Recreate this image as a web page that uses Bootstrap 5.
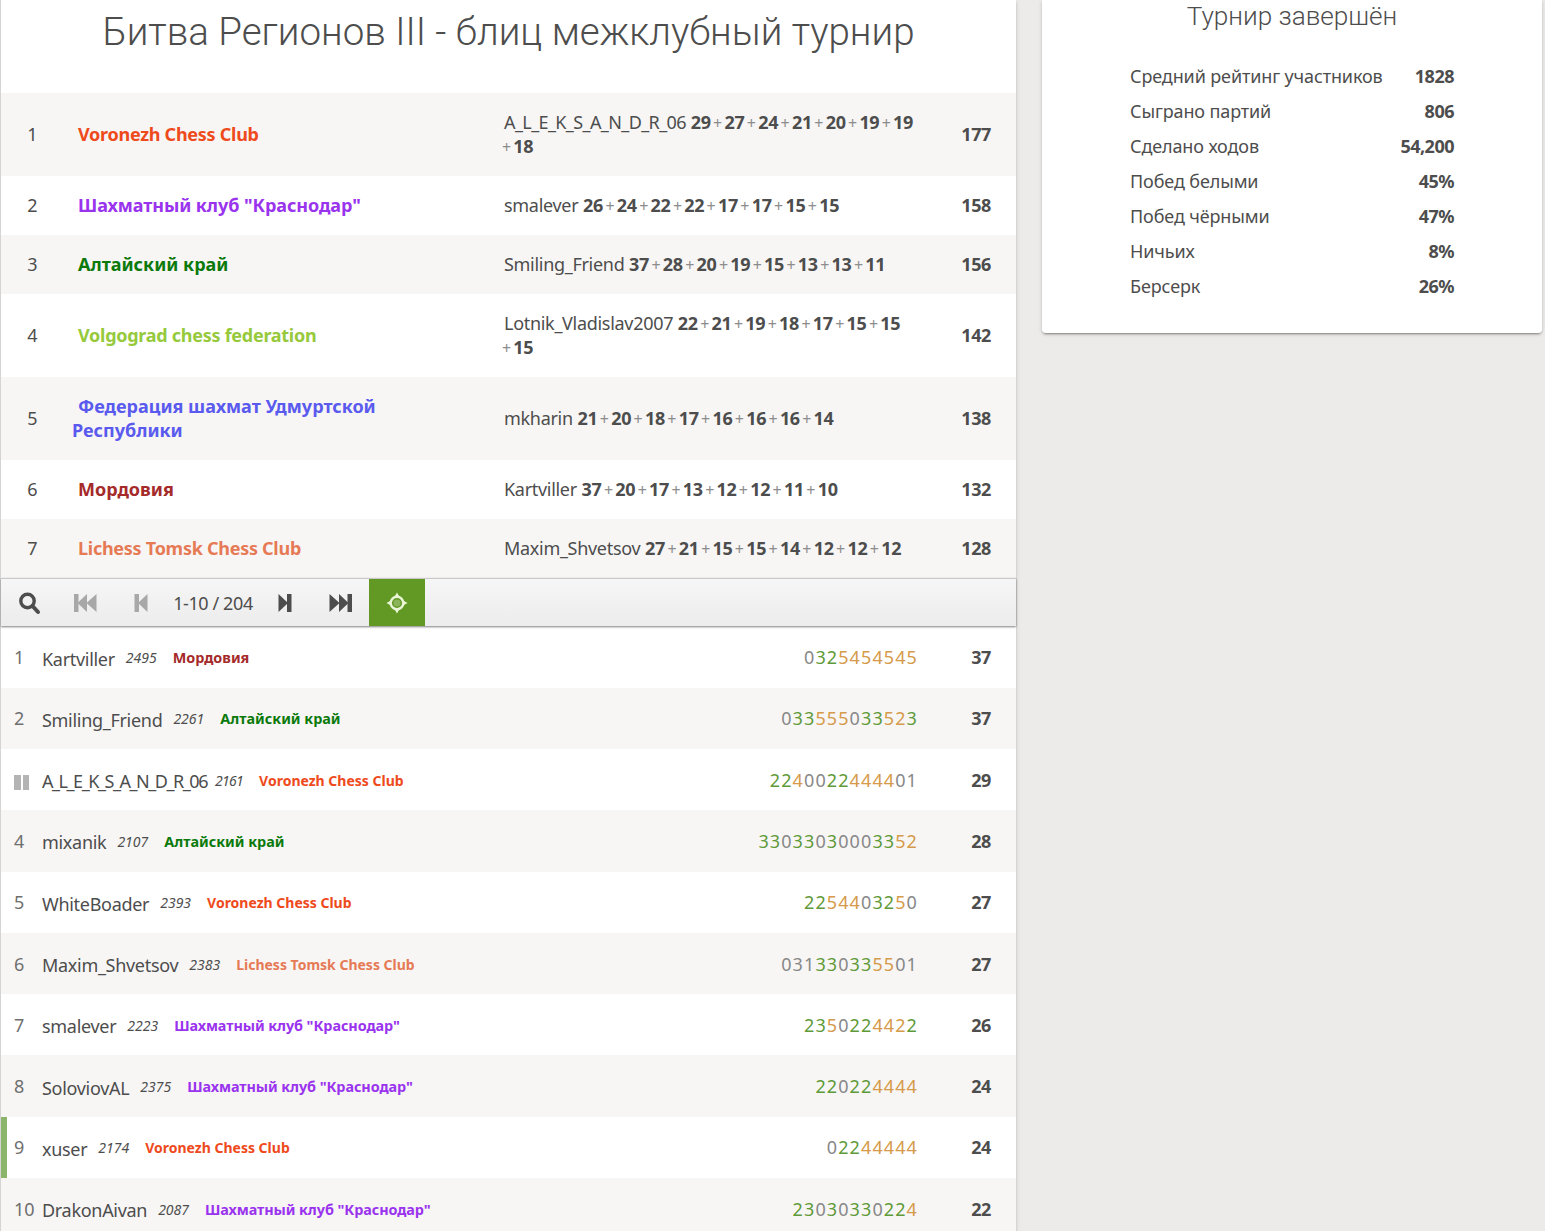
<!DOCTYPE html>
<html lang="ru">
<head>
<meta charset="utf-8">
<title>Битва Регионов III</title>
<link rel="stylesheet" href="https://cdn.jsdelivr.net/npm/bootstrap@5.3.0/dist/css/bootstrap.min.css">
<style>
html,body{height:1231px;overflow:hidden}
body{background:#edebe9;color:#4d4d4d;font-family:"Noto Sans",sans-serif;font-size:18px;line-height:24px}
.page-wrap{width:1545px;height:1231px;align-items:flex-start}
.main-box{width:1016px;height:1231px;background:#fff;border-left:1px solid #d4d4d4;box-shadow:0 2px 2px 0 rgba(0,0,0,.14),0 3px 1px -2px rgba(0,0,0,.2),0 1px 5px 0 rgba(0,0,0,.12);flex:none}
.main-box>*{flex:none}
.tour-title{height:93px;margin:0;padding-top:11px;font:300 38.5px/42px Roboto,sans-serif;text-align:center;color:#4d4d4d}
.team-row{align-items:center;padding:16.5px 0 18.5px}
.team-row:nth-child(odd){background:#f7f6f5}
.team-rank{width:71px;flex:none;text-align:center;padding-right:8px}
.team-name{width:432px;flex:none;font-weight:700;padding-right:40px}
.team-name span{margin-left:6px}
.team-name.t-lat{letter-spacing:-.27px}
.team-players{width:425px;flex:none}
.team-players b{font-weight:700;letter-spacing:-.3px}
.team-players em{font-style:normal;color:#8c8c8c;font-size:16px;line-height:1;margin:0 2.2px 0 2.4px;font-weight:400}
.team-players em.wrap-plus{margin-left:-2px}
.plr{letter-spacing:-.3px}
.plr.plr-long{letter-spacing:-.6px}
.total{margin-left:auto;padding-right:25px;font-weight:700;letter-spacing:-.4px}
.pager-bar{height:48.4px;border-top:1px solid #c9c9c9;background:linear-gradient(#f6f6f6,#ececec);box-shadow:0 1px 2px rgba(0,0,0,.5);position:relative;z-index:2;align-items:stretch}
.pager-btn{width:56px;flex:none;display:flex;align-items:center;justify-content:center}
.pager-btn svg{display:block}
.pager-off{color:#a8a8a8}
.pager-label{width:88px;flex:none;display:flex;align-items:center;justify-content:center;white-space:nowrap;letter-spacing:-.4px}
.pager-on{background:#629924;color:#eaf5d8}
.player-row{height:61.3px;align-items:center;flex:none;position:relative}
.player-row:nth-child(even){background:#f7f6f5}
.player-pos{width:41px;flex:none;padding-left:13px;color:#6f6f6f}
.player-name{white-space:nowrap;letter-spacing:-.3px;margin-top:3px}
.player-name.name-long{letter-spacing:-1.45px;margin-right:-3px}
.player-rating{font-style:italic;font-size:14px;margin-left:11px;margin-top:2px;white-space:nowrap}
.name-long~.player-rating{letter-spacing:-.7px}
.player-team{font-weight:700;font-size:14.4px;margin-left:16px;margin-top:2px;white-space:nowrap}
.player-team.t-lat{font-size:14px}
.player-score{margin-left:auto;letter-spacing:1.1px;white-space:nowrap;color:#888}
.player-total{width:98px;flex:none;text-align:right;padding-right:25px;font-weight:700;letter-spacing:-.4px}
.me-mark{position:absolute;left:0;top:0;bottom:0;width:6px;background:#8ab56b}
.pause-mark{display:flex;gap:2px;width:15px;height:15px;margin-top:5px}
.pause-mark i{flex:1;background:#b4b4b4}
.sg{color:#5f9a38}.so{color:#d59a4a}.sz{color:#888}
.c-vor{color:#ee4a1c}.c-kra{color:#9a33ee;letter-spacing:-.08px}.c-alt{color:#0b7a0b}.c-vol{color:#96c93c}.c-udm{color:#5a5aee}.c-mor{color:#a52a2a}.c-tom{color:#e67a55}
.side-box{width:500px;height:333px;margin-left:26px;background:#fff;border-radius:0 0 4px 4px;box-shadow:0 2px 2px 0 rgba(0,0,0,.14),0 3px 1px -2px rgba(0,0,0,.2),0 1px 5px 0 rgba(0,0,0,.12);flex:none}
.side-title{margin:0;height:58px;padding-top:1px;font:300 26.1px/30px Roboto,sans-serif;text-align:center;color:#4d4d4d}
.stat-list{margin:0 88px;padding:0;list-style:none;letter-spacing:-.12px}
.stat-list li{display:flex;justify-content:space-between;height:35px;align-items:center}
.stat-list b{font-weight:700;letter-spacing:-.5px}
</style>
</head>
<body>
<div class="page-wrap d-flex">
<main class="main-box d-flex flex-column">
  <h1 class="tour-title">Битва Регионов III - блиц межклубный турнир</h1>
  <section>
    <div class="team-row d-flex"><div class="team-rank">1</div><div class="team-name t-lat c-vor"><span>Voronezh Chess Club</span></div><div class="team-players"><span class="plr plr-long">A_L_E_K_S_A_N_D_R_06</span> <b>29</b><em>+</em><b>27</b><em>+</em><b>24</b><em>+</em><b>21</b><em>+</em><b>20</b><em>+</em><b>19</b><em>+</em><b>19</b><br><em class="wrap-plus">+</em><b>18</b></div><div class="total">177</div></div>
    <div class="team-row d-flex"><div class="team-rank">2</div><div class="team-name c-kra"><span>Шахматный клуб "Краснодар"</span></div><div class="team-players"><span class="plr">smalever</span> <b>26</b><em>+</em><b>24</b><em>+</em><b>22</b><em>+</em><b>22</b><em>+</em><b>17</b><em>+</em><b>17</b><em>+</em><b>15</b><em>+</em><b>15</b></div><div class="total">158</div></div>
    <div class="team-row d-flex"><div class="team-rank">3</div><div class="team-name c-alt"><span>Алтайский край</span></div><div class="team-players"><span class="plr">Smiling_Friend</span> <b>37</b><em>+</em><b>28</b><em>+</em><b>20</b><em>+</em><b>19</b><em>+</em><b>15</b><em>+</em><b>13</b><em>+</em><b>13</b><em>+</em><b>11</b></div><div class="total">156</div></div>
    <div class="team-row d-flex"><div class="team-rank">4</div><div class="team-name t-lat c-vol"><span>Volgograd chess federation</span></div><div class="team-players"><span class="plr">Lotnik_Vladislav2007</span> <b>22</b><em>+</em><b>21</b><em>+</em><b>19</b><em>+</em><b>18</b><em>+</em><b>17</b><em>+</em><b>15</b><em>+</em><b>15</b><br><em class="wrap-plus">+</em><b>15</b></div><div class="total">142</div></div>
    <div class="team-row d-flex"><div class="team-rank">5</div><div class="team-name c-udm"><span>Федерация шахмат Удмуртской</span> Республики</div><div class="team-players"><span class="plr">mkharin</span> <b>21</b><em>+</em><b>20</b><em>+</em><b>18</b><em>+</em><b>17</b><em>+</em><b>16</b><em>+</em><b>16</b><em>+</em><b>16</b><em>+</em><b>14</b></div><div class="total">138</div></div>
    <div class="team-row d-flex"><div class="team-rank">6</div><div class="team-name c-mor"><span>Мордовия</span></div><div class="team-players"><span class="plr">Kartviller</span> <b>37</b><em>+</em><b>20</b><em>+</em><b>17</b><em>+</em><b>13</b><em>+</em><b>12</b><em>+</em><b>12</b><em>+</em><b>11</b><em>+</em><b>10</b></div><div class="total">132</div></div>
    <div class="team-row d-flex"><div class="team-rank">7</div><div class="team-name t-lat c-tom"><span>Lichess Tomsk Chess Club</span></div><div class="team-players"><span class="plr">Maxim_Shvetsov</span> <b>27</b><em>+</em><b>21</b><em>+</em><b>15</b><em>+</em><b>15</b><em>+</em><b>14</b><em>+</em><b>12</b><em>+</em><b>12</b><em>+</em><b>12</b></div><div class="total">128</div></div>
  </section>
  <nav class="pager-bar d-flex">
    <div class="pager-btn"><svg width="24" height="24" viewBox="0 0 24 24" fill="none" stroke="currentColor" stroke-width="3.4"><circle cx="10.5" cy="10" r="6.7"/><path d="M15.5 15l5.500 6" stroke-width="4" stroke-linecap="round"/></svg></div>
    <div class="pager-btn pager-off"><svg width="24" height="20" viewBox="0 0 24 20" fill="currentColor"><rect x="1" y="1" width="4.5" height="18"/><path d="M14 1v18L4.5 10zM23.5 1v18L13.500 10z"/></svg></div>
    <div class="pager-btn pager-off"><svg width="16" height="20" viewBox="0 0 16 20" fill="currentColor"><rect x="1.500" y="1" width="4.5" height="18"/><path d="M14.500 1v18L5 10z"/></svg></div>
    <div class="pager-label">1-10 / 204</div>
    <div class="pager-btn"><svg width="16" height="20" viewBox="0 0 16 20" fill="currentColor"><rect x="10" y="1" width="4.5" height="18"/><path d="M1.500 1v18L11 10z"/></svg></div>
    <div class="pager-btn"><svg width="24" height="20" viewBox="0 0 24 20" fill="currentColor"><rect x="18.500" y="1" width="4.5" height="18"/><path d="M.5 1v18L10.500 10zM10 1v18L19.500 10z"/></svg></div>
    <div class="pager-btn pager-on"><svg width="22" height="22" viewBox="0 0 22 22" fill="currentColor"><circle cx="11" cy="11" r="6.3" fill="none" stroke="currentColor" stroke-width="2.4"/><circle cx="11" cy="11" r="3.6" opacity=".3"/><path d="M11 .500l2 3.500H9zM11 21.500l2-3.500H9zM.5 11l3.500-2v4zM21.500 11L18 9v4z"/></svg></div>
  </nav>
  <section>
    <div class="player-row d-flex"><div class="player-pos">1</div><div class="player-name">Kartviller</div><div class="player-rating">2495</div><div class="player-team c-mor">Мордовия</div><div class="player-score"><span class="sz">0</span><span class="sg">32</span><span class="so">5454545</span></div><div class="player-total">37</div></div>
    <div class="player-row d-flex"><div class="player-pos">2</div><div class="player-name">Smiling_Friend</div><div class="player-rating">2261</div><div class="player-team c-alt">Алтайский край</div><div class="player-score"><span class="sz">0</span><span class="sg">33</span><span class="so">555</span><span class="sz">0</span><span class="sg">33</span><span class="so">52</span><span class="sg">3</span></div><div class="player-total">37</div></div>
    <div class="player-row d-flex"><div class="player-pos"><div class="pause-mark"><i></i><i></i></div></div><div class="player-name name-long">A_L_E_K_S_A_N_D_R_06</div><div class="player-rating">2161</div><div class="player-team t-lat c-vor">Voronezh Chess Club</div><div class="player-score"><span class="sg">22</span><span class="so">4</span><span class="sz">00</span><span class="sg">22</span><span class="so">4444</span><span class="sz">01</span></div><div class="player-total">29</div></div>
    <div class="player-row d-flex"><div class="player-pos">4</div><div class="player-name">mixanik</div><div class="player-rating">2107</div><div class="player-team c-alt">Алтайский край</div><div class="player-score"><span class="sg">33</span><span class="sz">0</span><span class="sg">33</span><span class="sz">0</span><span class="sg">3</span><span class="sz">000</span><span class="sg">33</span><span class="so">52</span></div><div class="player-total">28</div></div>
    <div class="player-row d-flex"><div class="player-pos">5</div><div class="player-name">WhiteBoader</div><div class="player-rating">2393</div><div class="player-team t-lat c-vor">Voronezh Chess Club</div><div class="player-score"><span class="sg">22</span><span class="so">544</span><span class="sz">0</span><span class="sg">32</span><span class="so">5</span><span class="sz">0</span></div><div class="player-total">27</div></div>
    <div class="player-row d-flex"><div class="player-pos">6</div><div class="player-name">Maxim_Shvetsov</div><div class="player-rating">2383</div><div class="player-team t-lat c-tom">Lichess Tomsk Chess Club</div><div class="player-score"><span class="sz">031</span><span class="sg">33</span><span class="sz">0</span><span class="sg">33</span><span class="so">55</span><span class="sz">01</span></div><div class="player-total">27</div></div>
    <div class="player-row d-flex"><div class="player-pos">7</div><div class="player-name">smalever</div><div class="player-rating">2223</div><div class="player-team c-kra">Шахматный клуб "Краснодар"</div><div class="player-score"><span class="sg">23</span><span class="so">5</span><span class="sz">0</span><span class="sg">22</span><span class="so">442</span><span class="sg">2</span></div><div class="player-total">26</div></div>
    <div class="player-row d-flex"><div class="player-pos">8</div><div class="player-name">SoloviovAL</div><div class="player-rating">2375</div><div class="player-team c-kra">Шахматный клуб "Краснодар"</div><div class="player-score"><span class="sg">22</span><span class="sz">0</span><span class="sg">22</span><span class="so">4444</span></div><div class="player-total">24</div></div>
    <div class="player-row d-flex"><span class="me-mark"></span><div class="player-pos">9</div><div class="player-name">xuser</div><div class="player-rating">2174</div><div class="player-team t-lat c-vor">Voronezh Chess Club</div><div class="player-score"><span class="sz">0</span><span class="sg">22</span><span class="so">44444</span></div><div class="player-total">24</div></div>
    <div class="player-row d-flex"><div class="player-pos">10</div><div class="player-name">DrakonAivan</div><div class="player-rating">2087</div><div class="player-team c-kra">Шахматный клуб "Краснодар"</div><div class="player-score"><span class="sg">23</span><span class="sz">0</span><span class="sg">3</span><span class="sz">0</span><span class="sg">33</span><span class="sz">0</span><span class="sg">22</span><span class="so">4</span></div><div class="player-total">22</div></div>
  </section>
</main>
<aside class="side-box">
  <h2 class="side-title">Турнир завершён</h2>
  <ul class="stat-list">
    <li>Средний рейтинг участников <b>1828</b></li>
    <li>Сыграно партий <b>806</b></li>
    <li>Сделано ходов <b>54,200</b></li>
    <li>Побед белыми <b>45%</b></li>
    <li>Побед чёрными <b>47%</b></li>
    <li>Ничьих <b>8%</b></li>
    <li>Берсерк <b>26%</b></li>
  </ul>
</aside>
</div>
<script src="https://cdn.jsdelivr.net/npm/bootstrap@5.3.0/dist/js/bootstrap.bundle.min.js"></script>
</body>
</html>
